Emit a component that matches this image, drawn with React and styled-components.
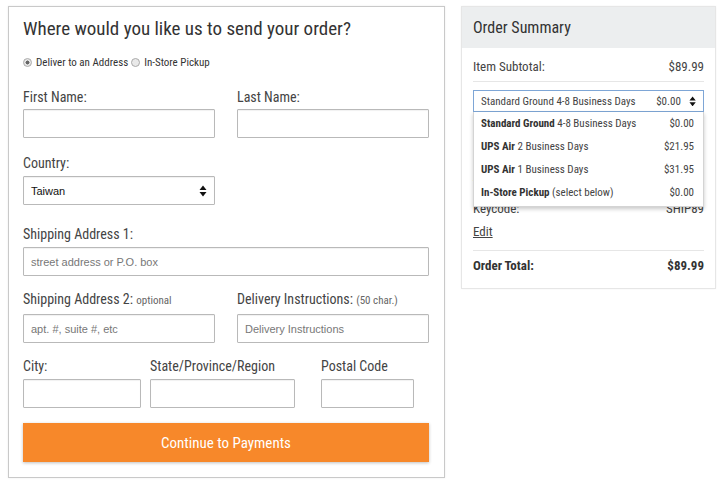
import React from 'react'
import styled, { createGlobalStyle } from 'styled-components'

const GlobalStyle = createGlobalStyle`
  * { box-sizing: border-box; }
  body {
    margin: 0;
    background: #fff;
    font-family: "Roboto Condensed", "Liberation Sans Narrow", Roboto, sans-serif;
    color: #333;
  }
`

const Page = styled.div`
  display: flex;
  align-items: flex-start;
  gap: 16px;
  padding: 6px 0 0 8px;
  width: 720px;
  height: 480px;
`

const FormPanel = styled.div`
  width: 437px;
  height: 472px;
  border: 1px solid #c9c9c9;
  box-shadow: 0 0 2px rgba(0, 0, 0, 0.08);
  padding: 9px 15px 0 14px;
`

const Heading = styled.h1`
  margin: 0;
  font-size: 19px;
  font-weight: 400;
  line-height: 26px;
  color: #333;
`

const RadioRow = styled.div`
  display: flex;
  align-items: center;
  gap: 3px;
  margin-top: 14px;
  font-size: 11px;
  color: #333;
`

const Radio = styled.span`
  display: inline-block;
  width: 9px;
  height: 9px;
  border-radius: 50%;
  border: 1px solid #aaa;
  background: ${p => (p.checked ? 'radial-gradient(circle, #666 0 1.8px, #e6e6e6 2.2px)' : '#e9e9e9')};
  margin-right: 1px;
`

const Row = styled.div`
  display: grid;
  grid-template-columns: ${p => p.cols || '214px 192px'};
  margin-top: ${p => p.top}px;
`

const Field = styled.div`
  display: flex;
  flex-direction: column;
`

const Label = styled.label`
  font-size: 14px;
  line-height: 18px;
  color: #444;
  small {
    font-size: 11px;
    color: #666;
  }
`

const Input = styled.div`
  margin-top: ${p => p.gap ?? 4}px;
  width: ${p => p.w}px;
  height: 29px;
  border: 1px solid #b9b9b9;
  border-radius: 1px;
  box-shadow: inset 0 1px 1px rgba(0, 0, 0, 0.06);
  display: flex;
  align-items: center;
  justify-content: space-between;
  padding: 0 7px;
  font-family: "Liberation Sans", Arial, sans-serif;
  font-size: 11px;
  color: ${p => (p.value ? '#111' : '#777')};
`

const Arrows = ({ size = 10 }) => (
  <svg width={size * 0.8} height={size * 1.2} viewBox="0 0 8 12">
    <path d="M4 0.5 L7.5 5 H0.5 Z M4 11.5 L7.5 7 H0.5 Z" fill="#111" />
  </svg>
)

const Button = styled.button`
  display: block;
  margin-top: 15px;
  width: 406px;
  height: 39px;
  border: none;
  background: #f7882a;
  color: #fff;
  font-family: inherit;
  font-size: 15px;
  box-shadow: 0 1px 3px rgba(0, 0, 0, 0.25);
`

const Summary = styled.div`
  width: 255px;
  border: 1px solid #e6e6e6;
  box-shadow: 0 0 2px rgba(0, 0, 0, 0.05);
`

const SummaryHead = styled.div`
  height: 41px;
  background: #eceeef;
  display: flex;
  align-items: center;
  padding: 0 11px;
  font-size: 16px;
  color: #333;
`

const SummaryBody = styled.div`
  padding: 3px 11px 8px;
  position: relative;
`

const Line = styled.div`
  display: flex;
  justify-content: space-between;
  align-items: center;
  height: ${p => p.h || 24}px;
  font-size: 13px;
  font-weight: ${p => (p.bold ? 700 : 400)};
  color: ${p => (p.bold ? '#333' : '#444')};
  border-top: ${p => (p.divider ? '1px solid #e6e6e6' : 'none')};
  margin-top: ${p => p.top || 0}px;
`

const EditLink = styled.a`
  font-size: 13px;
  color: #444;
  text-decoration: underline;
`

const ShipSelect = styled.div`
  margin-top: 8px;
  height: 22px;
  border: 1px solid #7ea6d6;
  display: flex;
  align-items: center;
  padding: 0 7px;
  font-size: 11px;
  color: #444;
  span:first-child { flex: 1; }
  span + span { margin-right: 8px; }
`

const Dropdown = styled.div`
  position: absolute;
  left: 11px;
  top: 64px;
  width: 231px;
  background: #fff;
  border: 1px solid #d4d4d4;
  border-top: none;
  box-shadow: 0 2px 4px rgba(0, 0, 0, 0.22);
  padding: 0 0 2px;
  z-index: 2;
`

const Option = styled.div`
  display: flex;
  justify-content: space-between;
  height: 23px;
  align-items: center;
  padding: 0 9px 0 7px;
  font-size: 11px;
  color: #444;
  b { color: #333; }
`

const options = [
  ['Standard Ground', ' 4-8 Business Days', '$0.00'],
  ['UPS Air', ' 2 Business Days', '$21.95'],
  ['UPS Air', ' 1 Business Days', '$31.95'],
  ['In-Store Pickup', ' (select below)', '$0.00'],
]

export default function App() {
  return (
    <Page>
      <GlobalStyle />
      <FormPanel>
        <Heading>Where would you like us to send your order?</Heading>
        <RadioRow>
          <Radio checked /> Deliver to an Address <Radio /> In-Store Pickup
        </RadioRow>

        <Row top={19}>
          <Field>
            <Label>First Name:</Label>
            <Input w={192} gap={3} />
          </Field>
          <Field>
            <Label>Last Name:</Label>
            <Input w={192} gap={3} />
          </Field>
        </Row>

        <Row top={16}>
          <Field>
            <Label>Country:</Label>
            <Input w={192} value>
              <span>Taiwan</span>
              <Arrows />
            </Input>
          </Field>
        </Row>

        <Row top={20} cols="406px">
          <Field>
            <Label>Shipping Address 1:</Label>
            <Input w={406}>street address or P.O. box</Input>
          </Field>
        </Row>

        <Row top={14}>
          <Field>
            <Label>Shipping Address 2: <small>optional</small></Label>
            <Input w={192}>apt. #, suite #, etc</Input>
          </Field>
          <Field>
            <Label>Delivery Instructions: <small>(50 char.)</small></Label>
            <Input w={192}>Delivery Instructions</Input>
          </Field>
        </Row>

        <Row top={14} cols="127px 171px 108px">
          <Field>
            <Label>City:</Label>
            <Input w={118} />
          </Field>
          <Field>
            <Label>State/Province/Region</Label>
            <Input w={145} />
          </Field>
          <Field>
            <Label>Postal Code</Label>
            <Input w={93} />
          </Field>
        </Row>

        <Button>Continue to Payments</Button>
      </FormPanel>

      <Summary>
        <SummaryHead>Order Summary</SummaryHead>
        <SummaryBody>
          <Line h={30}>
            <span>Item Subtotal:</span>
            <span>$89.99</span>
          </Line>
          <Line divider h={1} />
          <ShipSelect>
            <span>Standard Ground 4-8 Business Days</span>
            <span>$0.00</span>
            <Arrows size={9} />
          </ShipSelect>
          <Line top={12}>
            <span>Shipping:</span>
            <span>$0.00</span>
          </Line>
          <Line>
            <span>Discount:</span>
            <span>-$0.00</span>
          </Line>
          <Line>
            <span>Tax:</span>
            <span>$0.00</span>
          </Line>
          <Line>
            <span>Keycode:</span>
            <span>SHIP89</span>
          </Line>
          <Line h={22}>
            <EditLink>Edit</EditLink>
          </Line>
          <Line divider top={8} h={30} bold>
            <span>Order Total:</span>
            <span>$89.99</span>
          </Line>
          <Dropdown>
            {options.map(([b, rest, price], i) => (
              <Option key={i}>
                <span><b>{b}</b>{rest}</span>
                <span>{price}</span>
              </Option>
            ))}
          </Dropdown>
        </SummaryBody>
      </Summary>
    </Page>
  )
}
